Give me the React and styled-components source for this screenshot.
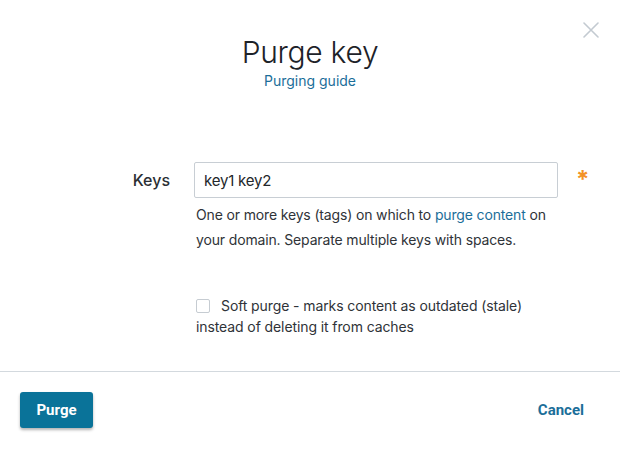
import React from "react";
import styled, { createGlobalStyle } from "styled-components";

const GlobalStyle = createGlobalStyle`
  body {
    margin: 0;
    background: #fff;
    font-family: Inter, "Liberation Sans", Arial, sans-serif;
    color: #2d3136;
  }
`;

const Modal = styled.div`
  width: 620px;
  height: 449px;
  display: flex;
  flex-direction: column;
  background: #fff;
  position: relative;
  overflow: hidden;
`;

const CloseButton = styled.button`
  position: absolute;
  top: 22px;
  right: 21px;
  width: 16px;
  height: 16px;
  padding: 0;
  border: none;
  background: none;
  cursor: pointer;
  color: #c3cad1;
`;

const Header = styled.div`
  display: flex;
  flex-direction: column;
  align-items: center;
  padding-top: 33px;
`;

const Title = styled.h1`
  margin: 0;
  font-family: Inter, "Liberation Sans", Arial, sans-serif;
  font-weight: 300;
  font-size: 30px;
  line-height: 38px;
  letter-spacing: -0.3px;
  color: #1d2228;
`;

const Link = styled.a`
  color: #1b6e99;
  text-decoration: none;
`;

const GuideLink = styled(Link)`
  font-size: 14px;
  line-height: 20px;
`;

const Body = styled.div`
  flex: 1;
  padding-top: 71px;
  display: flex;
  flex-direction: column;
  gap: 43px;
`;

const Row = styled.div`
  display: grid;
  grid-template-columns: 170px 364px 26px;
  column-gap: 24px;
  align-items: start;
`;

const Label = styled.label`
  text-align: right;
  font-size: 16px;
  font-weight: 500;
  line-height: 36px;
  color: #2b2f34;
`;

const Field = styled.div`
  display: flex;
  flex-direction: column;
`;

const Input = styled.input`
  box-sizing: border-box;
  height: 36px;
  width: 100%;
  border: 1px solid #c8ced4;
  border-radius: 2px;
  padding: 0 9px;
  font-family: Inter, "Liberation Sans", Arial, sans-serif;
  font-size: 15px;
  letter-spacing: -0.2px;
  color: #23272b;
  outline: none;
`;

const Required = styled.span`
  color: #f39226;
  font-size: 24px;
  font-weight: 700;
  line-height: 36px;
  margin-left: -6px;
`;

const Help = styled.p`
  margin: 4px 0 0 2px;
  font-size: 14px;
  line-height: 25px;
  letter-spacing: -0.15px;
  color: #2f3338;
`;

const CheckRow = styled.div`
  padding-left: 196px;
  width: 340px;
  font-size: 14px;
  line-height: 21px;
  letter-spacing: -0.1px;
  color: #2f3338;
`;

const Checkbox = styled.span`
  display: inline-block;
  box-sizing: border-box;
  width: 14px;
  height: 14px;
  border: 1px solid #c6ccd2;
  border-radius: 2px;
  vertical-align: -2px;
  margin-right: 11px;
`;

const Footer = styled.div`
  border-top: 1px solid #d3d9de;
  height: 78px;
  box-sizing: border-box;
  padding: 20px 36px 0 20px;
  display: flex;
  justify-content: space-between;
  align-items: flex-start;
`;

const PrimaryButton = styled.button`
  width: 73px;
  height: 36px;
  border: none;
  border-radius: 3px;
  background: #0a7399;
  color: #fff;
  font-family: Roboto, "Liberation Sans", sans-serif;
  font-weight: 700;
  font-size: 15px;
  box-shadow: 0 2px 3px rgba(0, 0, 0, 0.3);
  cursor: pointer;
`;

const TextButton = styled.button`
  border: none;
  background: none;
  padding: 0;
  height: 36px;
  color: #1b6e99;
  font-family: Roboto, "Liberation Sans", sans-serif;
  font-weight: 700;
  font-size: 15px;
  cursor: pointer;
`;

export default function App() {
  return (
    <Modal>
      <GlobalStyle />
      <CloseButton aria-label="Close">
        <svg width="16" height="16" viewBox="0 0 16 16">
          <path
            d="M1 1L15 15M15 1L1 15"
            stroke="currentColor"
            strokeWidth="1.6"
            strokeLinecap="round"
          />
        </svg>
      </CloseButton>
      <Header>
        <Title>Purge key</Title>
        <GuideLink href="#">Purging guide</GuideLink>
      </Header>
      <Body>
        <Row>
          <Label>Keys</Label>
          <Field>
            <Input defaultValue="key1 key2" />
            <Help>
              One or more keys (tags) on which to{" "}
              <Link href="#">purge content</Link> on your domain. Separate
              multiple keys with spaces.
            </Help>
          </Field>
          <Required>*</Required>
        </Row>
        <CheckRow>
          <Checkbox />
          Soft purge - marks content as outdated (stale) instead of deleting
          it from caches
        </CheckRow>
      </Body>
      <Footer>
        <PrimaryButton>Purge</PrimaryButton>
        <TextButton>Cancel</TextButton>
      </Footer>
    </Modal>
  );
}
